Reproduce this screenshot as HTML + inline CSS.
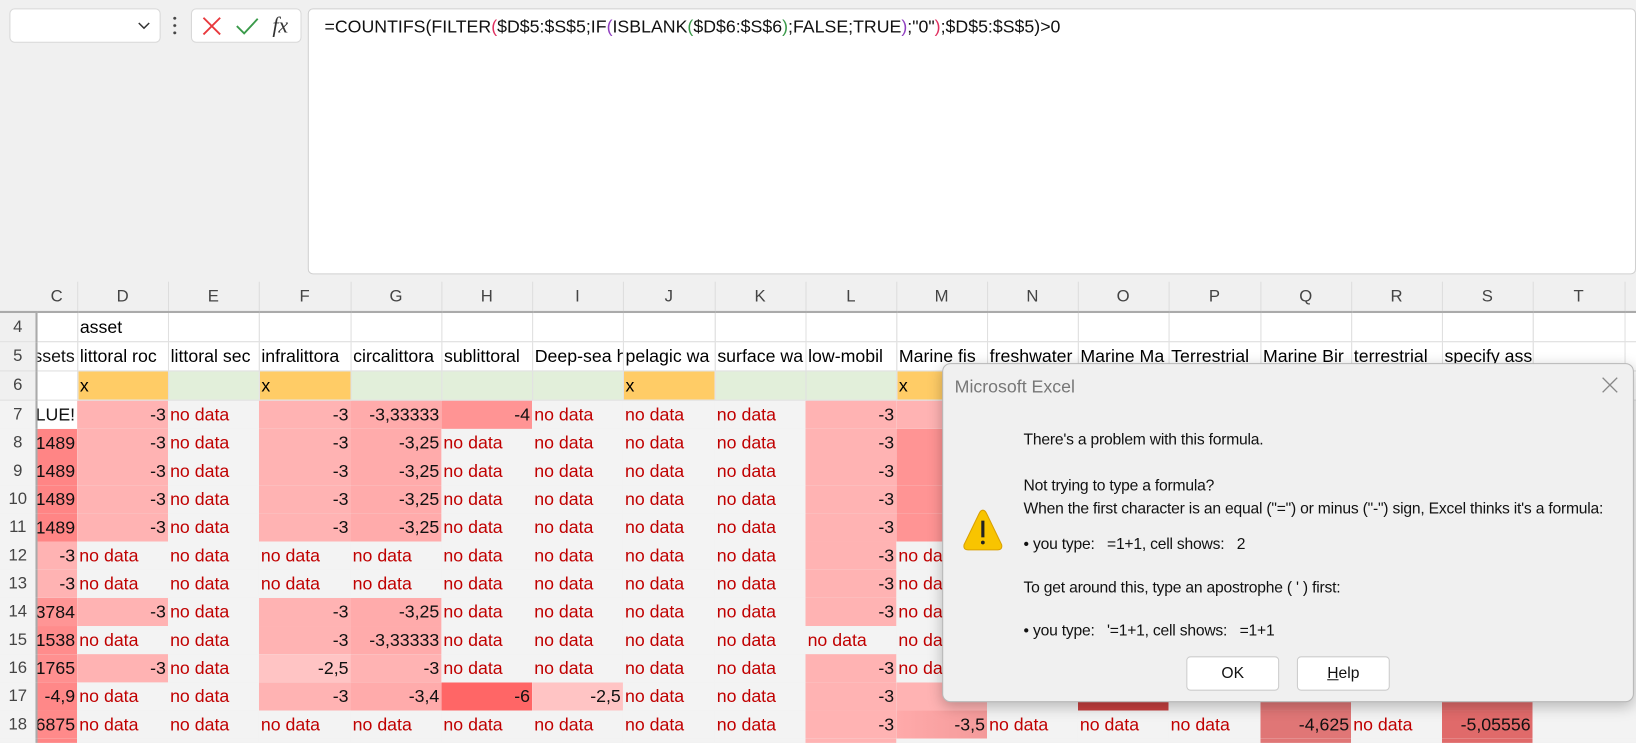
<!DOCTYPE html>
<html><head><meta charset="utf-8"><style>
*{margin:0;padding:0;box-sizing:border-box}
body{width:1636px;height:742px;overflow:hidden;background:#f0f0f0;font-family:"Liberation Sans",sans-serif;position:relative}
#w{position:absolute;left:0;top:0;width:1568px;height:712px;transform:scale(1.04337);transform-origin:0 0;overflow:hidden}
.nb{position:absolute;left:9px;top:8px;width:145px;height:33px;background:#fff;border:1px solid #d8d8d8;border-radius:5px}
.fbtn{position:absolute;left:183px;top:8px;width:106px;height:33px;background:#fff;border:1px solid #d8d8d8;border-radius:5px}
.fx{position:absolute;left:295px;top:8px;width:1273px;height:255px;background:#fff;border:1px solid #d0d0d0;border-radius:5px;font-size:17px;padding:7px 0 0 15px;color:#111;white-space:nowrap}
table{position:absolute;left:0;top:270px;width:1568px;border-collapse:collapse;table-layout:fixed;font-size:17px}
td{height:27px;overflow:hidden;white-space:nowrap;padding:0 2px;line-height:27px}
tr.h td{height:29px;background:#f0f0f0;text-align:center;color:#444;border-right:1px solid #ddd;border-bottom:2px solid #aaa;font-size:16px}
td.r{background:#f0f0f0;text-align:center;color:#444;font-size:16px;border-right:2px solid #aaa;padding:0}
tr.w td{background:#fff;border-right:1px solid #e0e0e0;border-bottom:1px solid #e0e0e0}
tr.w td.r{background:#f0f0f0;border-right:2px solid #aaa}
tr.d td{background:#f3f3f3}
.n{text-align:right;color:#111}
.cc{direction:rtl;text-align:right;padding:0 2px;color:#111}
.cc span{direction:ltr;unicode-bidi:isolate}
.nd{color:#c00000}
.p{background:#ffb3b3!important}.g{background:#ffabab!important}.p4{background:#ff9494!important}.p6{background:#ff6666!important}.pl{background:#ffc4c4!important}
.c1{background:#ff8585!important}.q{background:#e07676!important}.s{background:#e06a6a!important}
.o{background:#ffcc66!important}.gr{background:#e2efda!important}
.dlg{position:absolute;left:903px;top:348px;width:663px;height:325px;background:#f0f0f0;border:1px solid #b8b8b8;border-radius:8px;box-shadow:0 4px 14px rgba(0,0,0,.25);font-size:15px;color:#111}
.dlg .t{position:absolute;left:11px;top:12px;font-size:17px;color:#777}
.dlg p{position:absolute;left:77px;white-space:nowrap;letter-spacing:-0.2px}
.btn{position:absolute;top:280px;width:89px;height:33px;background:#fff;border:1px solid #ccc;border-radius:4px;text-align:center;line-height:31px;font-size:15px}
</style></head><body><div id="w">
<div class="nb"><svg style="position:absolute;left:122px;top:11px" width="12" height="10"><path d="M1 2 L6 7 L11 2" stroke="#333" fill="none" stroke-width="1.4"/></svg></div>
<div style="position:absolute;left:166px;top:14px;width:3px;height:20px;background:radial-gradient(circle,#444 1.3px,transparent 1.5px) 0 0/3px 7px"></div>
<div class="fbtn">
<svg style="position:absolute;left:9px;top:6px" width="20" height="20"><path d="M2 2 L18 18 M18 2 L2 18" stroke="#e8393d" stroke-width="1.8"/></svg>
<svg style="position:absolute;left:41px;top:6px" width="24" height="20"><path d="M2 10 L9 17 L22 3" stroke="#3a9a4a" stroke-width="1.8" fill="none"/></svg>
<span style="position:absolute;left:77px;top:3px;font-family:'Liberation Serif',serif;font-style:italic;font-size:21px;color:#333">fx</span>
</div>
<div class="fx">=COUNTIFS(FILTER<span style="color:#e03060">(</span>$D$5:$S$5;IF<span style="color:#9040c0">(</span>ISBLANK<span style="color:#3a9a4a">(</span>$D$6:$S$6<span style="color:#3a9a4a">)</span>;FALSE;TRUE<span style="color:#9040c0">)</span>;"0"<span style="color:#e03060">)</span>;$D$5:$S$5)&gt;0</div>

<table>
<colgroup><col style="width:35px"><col style="width:39px"><col style="width:87px"><col style="width:87px"><col style="width:88px"><col style="width:87px"><col style="width:87px"><col style="width:87px"><col style="width:88px"><col style="width:87px"><col style="width:87px"><col style="width:87px"><col style="width:87px"><col style="width:87px"><col style="width:88px"><col style="width:87px"><col style="width:87px"><col style="width:87px"><col style="width:88px"><col style="width:11px"></colgroup>
<tr class="h"><td style="border-right:none"></td><td>C</td><td>D</td><td>E</td><td>F</td><td>G</td><td>H</td><td>I</td><td>J</td><td>K</td><td>L</td><td>M</td><td>N</td><td>O</td><td>P</td><td>Q</td><td>R</td><td>S</td><td>T</td><td></td></tr>
<tr class="w"><td class="r">4</td><td></td><td>asset</td><td></td><td></td><td></td><td></td><td></td><td></td><td></td><td></td><td></td><td></td><td></td><td></td><td></td><td></td><td></td><td></td><td></td></tr>
<tr class="w"><td class="r">5</td><td class="cc"><span>assets</span></td><td>littoral roc</td><td>littoral sec</td><td>infralittora</td><td>circalittora</td><td>sublittoral</td><td>Deep-sea h</td><td>pelagic wa</td><td>surface wa</td><td>low-mobil</td><td>Marine fis</td><td>freshwater</td><td>Marine Ma</td><td>Terrestrial</td><td>Marine Bir</td><td>terrestrial</td><td>specify asset</td><td></td><td></td></tr>
<tr class="w"><td class="r">6</td><td></td><td class="o">x</td><td class="gr"></td><td class="o">x</td><td class="gr"></td><td class="gr"></td><td class="gr"></td><td class="o">x</td><td class="gr"></td><td class="gr"></td><td class="o">x</td><td></td><td></td><td></td><td></td><td></td><td></td><td></td><td></td></tr>
<tr class="d"><td class="r">7</td><td class="cc" style="background:#fff"><span>#VALUE!</span></td><td class="n p">-3</td><td class="nd">no data</td><td class="n p">-3</td><td class="n g">-3,33333</td><td class="n p4">-4</td><td class="nd">no data</td><td class="nd">no data</td><td class="nd">no data</td><td class="n p">-3</td><td class="p"></td><td></td><td></td><td></td><td></td><td></td><td></td><td></td><td></td></tr>
<tr class="d"><td class="r">8</td><td class="cc c1"><span>-3,1489</span></td><td class="n p">-3</td><td class="nd">no data</td><td class="n p">-3</td><td class="n g">-3,25</td><td class="nd">no data</td><td class="nd">no data</td><td class="nd">no data</td><td class="nd">no data</td><td class="n p">-3</td><td class="p4"></td><td></td><td></td><td></td><td></td><td></td><td></td><td></td><td></td></tr>
<tr class="d"><td class="r">9</td><td class="cc c1"><span>-3,1489</span></td><td class="n p">-3</td><td class="nd">no data</td><td class="n p">-3</td><td class="n g">-3,25</td><td class="nd">no data</td><td class="nd">no data</td><td class="nd">no data</td><td class="nd">no data</td><td class="n p">-3</td><td class="p4"></td><td></td><td></td><td></td><td></td><td></td><td></td><td></td><td></td></tr>
<tr class="d"><td class="r">10</td><td class="cc c1"><span>-3,1489</span></td><td class="n p">-3</td><td class="nd">no data</td><td class="n p">-3</td><td class="n g">-3,25</td><td class="nd">no data</td><td class="nd">no data</td><td class="nd">no data</td><td class="nd">no data</td><td class="n p">-3</td><td class="p4"></td><td></td><td></td><td></td><td></td><td></td><td></td><td></td><td></td></tr>
<tr class="d"><td class="r">11</td><td class="cc c1"><span>-3,1489</span></td><td class="n p">-3</td><td class="nd">no data</td><td class="n p">-3</td><td class="n g">-3,25</td><td class="nd">no data</td><td class="nd">no data</td><td class="nd">no data</td><td class="nd">no data</td><td class="n p">-3</td><td class="p4"></td><td></td><td></td><td></td><td></td><td></td><td></td><td></td><td></td></tr>
<tr class="d"><td class="r">12</td><td class="n p">-3</td><td class="nd">no data</td><td class="nd">no data</td><td class="nd">no data</td><td class="nd">no data</td><td class="nd">no data</td><td class="nd">no data</td><td class="nd">no data</td><td class="nd">no data</td><td class="n p">-3</td><td class="nd">no data</td><td></td><td></td><td></td><td></td><td></td><td></td><td></td><td></td></tr>
<tr class="d"><td class="r">13</td><td class="n p">-3</td><td class="nd">no data</td><td class="nd">no data</td><td class="nd">no data</td><td class="nd">no data</td><td class="nd">no data</td><td class="nd">no data</td><td class="nd">no data</td><td class="nd">no data</td><td class="n p">-3</td><td class="nd">no data</td><td></td><td></td><td></td><td></td><td></td><td></td><td></td><td></td></tr>
<tr class="d"><td class="r">14</td><td class="cc" style="background:#ff9595"><span>-3,13784</span></td><td class="n p">-3</td><td class="nd">no data</td><td class="n p">-3</td><td class="n g">-3,25</td><td class="nd">no data</td><td class="nd">no data</td><td class="nd">no data</td><td class="nd">no data</td><td class="n p">-3</td><td class="nd">no data</td><td></td><td></td><td></td><td></td><td></td><td></td><td></td><td></td></tr>
<tr class="d"><td class="r">15</td><td class="cc" style="background:#ff8c8c"><span>-3,1538</span></td><td class="nd">no data</td><td class="nd">no data</td><td class="n p">-3</td><td class="n g">-3,33333</td><td class="nd">no data</td><td class="nd">no data</td><td class="nd">no data</td><td class="nd">no data</td><td class="nd">no data</td><td class="nd">no data</td><td></td><td></td><td></td><td></td><td></td><td></td><td></td><td></td></tr>
<tr class="d"><td class="r">16</td><td class="cc" style="background:#ff9090"><span>-3,1765</span></td><td class="n p">-3</td><td class="nd">no data</td><td class="n pl">-2,5</td><td class="n p">-3</td><td class="nd">no data</td><td class="nd">no data</td><td class="nd">no data</td><td class="nd">no data</td><td class="n p">-3</td><td class="nd">no data</td><td></td><td></td><td></td><td></td><td></td><td></td><td></td><td></td></tr>
<tr class="d"><td class="r">17</td><td class="n" style="background:#ff8888">-4,9</td><td class="nd">no data</td><td class="nd">no data</td><td class="n p">-3</td><td class="n g">-3,4</td><td class="n p6">-6</td><td class="n pl">-2,5</td><td class="nd">no data</td><td class="nd">no data</td><td class="n p">-3</td><td class="p"></td><td></td><td style="background:#c84040"></td><td></td><td class="q"></td><td></td><td class="s"></td><td></td><td></td></tr>
<tr class="d"><td class="r">18</td><td class="cc" style="background:#ff8a8a"><span>-3,6875</span></td><td class="nd">no data</td><td class="nd">no data</td><td class="nd">no data</td><td class="nd">no data</td><td class="nd">no data</td><td class="nd">no data</td><td class="nd">no data</td><td class="nd">no data</td><td class="n p">-3</td><td class="n" style="background:linear-gradient(90deg,#ffaaaa,#f49a9a)">-3,5</td><td class="nd">no data</td><td class="nd">no data</td><td class="nd">no data</td><td class="n q">-4,625</td><td class="nd">no data</td><td class="n s">-5,05556</td><td></td><td></td></tr>
<tr class="d"><td class="r">19</td><td class="c1"></td><td></td><td></td><td></td><td></td><td></td><td></td><td></td><td></td><td class="p"></td><td></td><td></td><td></td><td></td><td class="q"></td><td></td><td class="s"></td><td></td><td></td></tr>
</table>

<div class="dlg">
<div class="t">Microsoft Excel</div>
<svg style="position:absolute;right:14px;top:12px" width="16" height="16"><path d="M1 1 L15 15 M15 1 L1 15" stroke="#888" stroke-width="1.3"/></svg>
<p style="top:64px">There's a problem with this formula.</p>
<p style="top:108px">Not trying to type a formula?</p>
<p style="top:130px">When the first character is an equal ("=") or minus ("-") sign, Excel thinks it's a formula:</p>
<p style="top:164px">• you type:&nbsp;&nbsp; =1+1, cell shows:&nbsp;&nbsp; 2</p>
<p style="top:206px">To get around this, type an apostrophe ( ' ) first:</p>
<p style="top:247px">• you type:&nbsp;&nbsp; '=1+1, cell shows:&nbsp;&nbsp; =1+1</p>
<svg style="position:absolute;left:18px;top:138px" width="40" height="42"><path d="M20 2 Q22 2 23.5 5 L38 35 Q39 40 34 40 L6 40 Q1 40 2 35 L16.5 5 Q18 2 20 2 Z" fill="#f8c400" stroke="#d9a000" stroke-width="1"/><rect x="18.5" y="12" width="3" height="16" fill="#222"/><circle cx="20" cy="33" r="1.8" fill="#222"/></svg>
<div class="btn" style="left:233px">OK</div>
<div class="btn" style="left:339px"><u>H</u>elp</div>
</div>
</div></body></html>
